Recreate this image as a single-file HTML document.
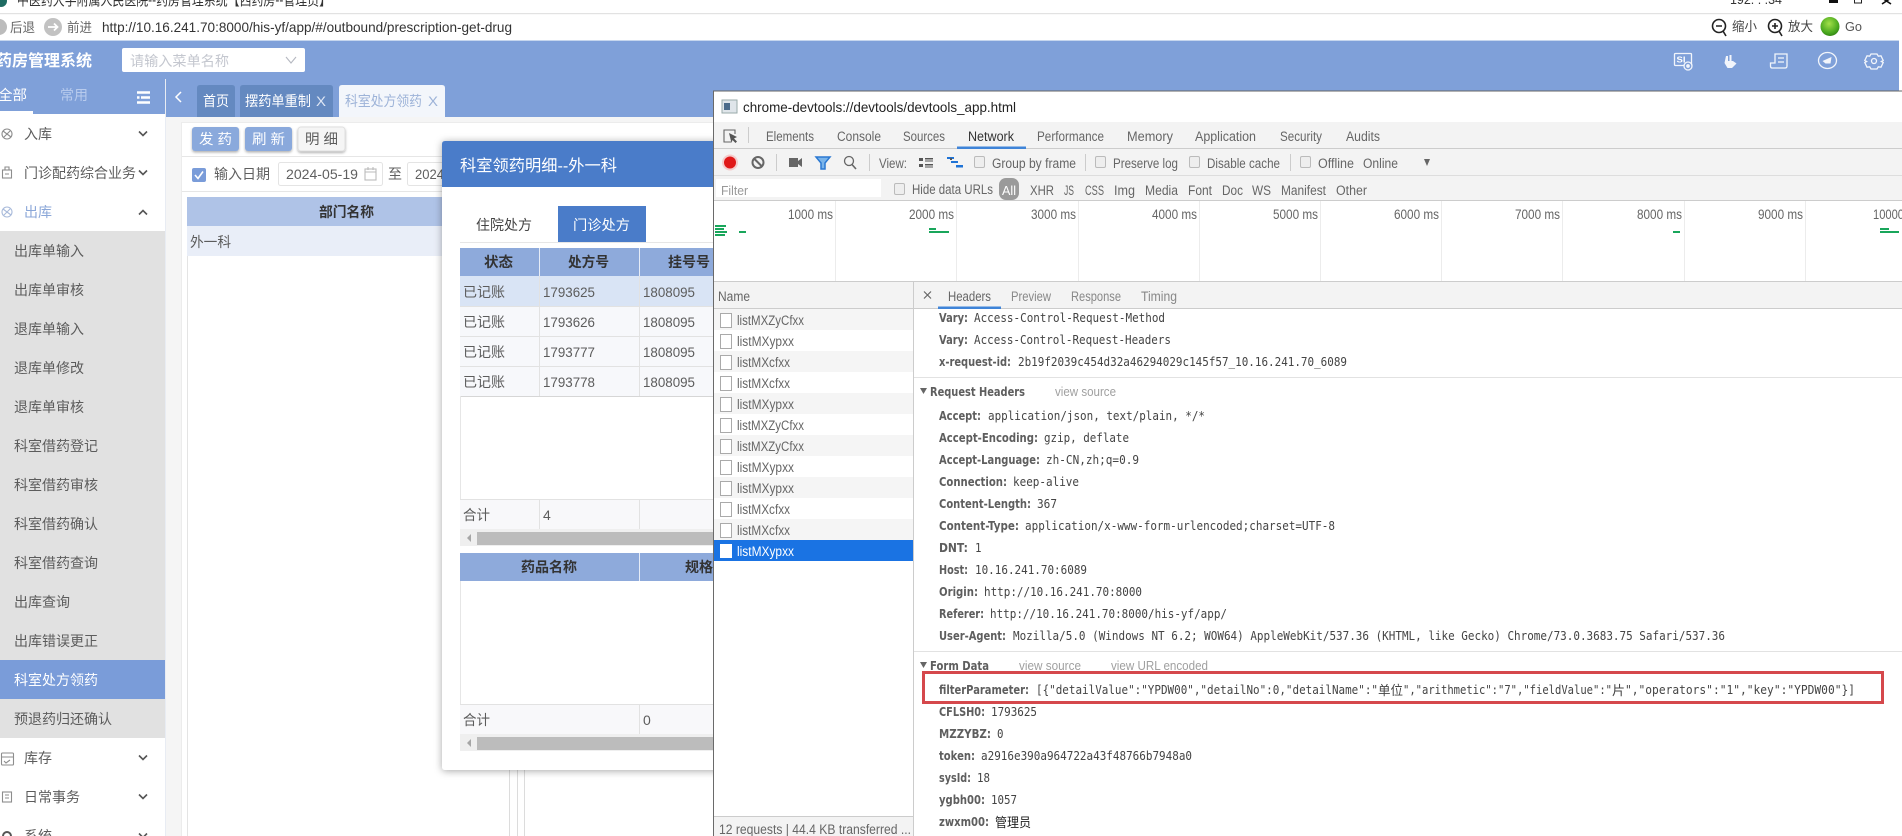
<!DOCTYPE html>
<html lang="zh-CN"><head><meta charset="utf-8"><title>药房管理系统</title>
<style>
html,body{margin:0;padding:0;width:1902px;height:836px;overflow:hidden;background:#fff}
svg{display:block}
text{font-family:"Liberation Sans","Noto Sans CJK SC",sans-serif;font-size:14px;fill:#5c5c5c;white-space:pre}
.w{fill:#fff}
.b{font-weight:700;fill:#333}
.l{font-family:"DejaVu Sans","Noto Sans CJK SC",sans-serif;font-size:12px;font-weight:700;fill:#5e5e5e}
.m{font-family:"DejaVu Sans Mono","Noto Sans CJK SC",monospace;font-size:12px;fill:#444}
.g{font-size:12.500px;fill:#a0a0a0}
.n{font-size:13.500px;fill:#666}
.ic{fill:none;stroke:#8d8d8d;stroke-width:1.1}
</style></head><body>
<svg xmlns="http://www.w3.org/2000/svg" width="1902" height="836" viewBox="0 0 1902 836">
<defs>
<radialGradient id="go" cx=".45" cy=".35" r=".7"><stop offset="0" stop-color="#a3e04a"/><stop offset=".7" stop-color="#49a81e"/><stop offset="1" stop-color="#2e7d12"/></radialGradient>
<filter id="sh" x="-10%" y="-10%" width="120%" height="120%"><feDropShadow dx="0" dy="1" stdDeviation="4" flood-color="#000" flood-opacity=".35"/></filter>
<filter id="bs" x="-20%" y="-20%" width="140%" height="150%"><feDropShadow dx="0" dy="1.5" stdDeviation="1.2" flood-color="#000" flood-opacity=".3"/></filter>
</defs>

<!-- window top -->
<rect width="1902" height="836" fill="#fff"/>
<circle cx="1" cy="1" r="6" fill="#1e6b62"/>
<text x="17" y="5" textLength="314" lengthAdjust="spacingAndGlyphs" style="font-size:15px;fill:#333">中医药大学附属人民医院--药房管理系统【西药房--管理员】</text>
<text x="1730" y="4" textLength="52" lengthAdjust="spacingAndGlyphs" style="font-size:13px;fill:#333">192. . .34</text>
<rect x="1829" y="0" width="9" height="3" fill="#111"/>
<rect x="1854.500" y="-3" width="7" height="6" fill="none" stroke="#222"/>
<path d="M1882-2l9 6M1891-2l-9 6" stroke="#111" stroke-width="1.6"/>
<rect x="0" y="13" width="1902" height="1.2" fill="#e2e2e2"/>

<!-- browser toolbar -->
<circle cx="-1" cy="27" r="8" fill="#bcbcbc"/>
<text x="10" y="32" textLength="25" lengthAdjust="spacingAndGlyphs" style="font-size:13px;fill:#666">后退</text>
<circle cx="53" cy="27" r="9" fill="#c2c2c2"/>
<path d="M48 27h9M54 23.500l3.500 3.500-3.500 3.500" fill="none" stroke="#fff" stroke-width="1.800"/>
<text x="67" y="32" textLength="25" lengthAdjust="spacingAndGlyphs" style="font-size:13px;fill:#666">前进</text>
<text x="102" y="32" textLength="410" lengthAdjust="spacingAndGlyphs" style="font-size:14px;fill:#333">http://10.16.241.70:8000/his-yf/app/#/outbound/prescription-get-drug</text>
<circle cx="1719" cy="26" r="6.500" fill="none" stroke="#222" stroke-width="1.600"/><path d="M1716 26h6M1723 31l3 5" stroke="#222" stroke-width="1.600"/>
<text x="1732" y="31" textLength="25" lengthAdjust="spacingAndGlyphs" style="font-size:13px;fill:#444">缩小</text>
<circle cx="1775" cy="26" r="6.500" fill="none" stroke="#222" stroke-width="1.600"/><path d="M1772 26h6M1775 23v6M1779 31l3 5" stroke="#222" stroke-width="1.600"/>
<text x="1788" y="31" textLength="25" lengthAdjust="spacingAndGlyphs" style="font-size:13px;fill:#444">放大</text>
<ellipse cx="1830" cy="26.500" rx="9.500" ry="9.500" fill="url(#go)"/>
<text x="1845" y="31" textLength="17" lengthAdjust="spacingAndGlyphs" style="font-size:13px;fill:#555">Go</text>

<!-- blue header -->
<rect x="0" y="41" width="1899" height="76" fill="#7fa0d9"/>
<rect x="0" y="40" width="1899" height="1" fill="#c6d6ee"/>
<text x="-4" y="66" textLength="96" lengthAdjust="spacingAndGlyphs" class="w" style="font-size:16px;font-weight:700">药房管理系统</text>
<rect x="122" y="48" width="183" height="24" rx="2" fill="#fff"/>
<text x="130" y="66" textLength="99" lengthAdjust="spacingAndGlyphs" style="fill:#c4c7cf">请输入菜单名称</text>
<path d="M286 57l5 6 5-6" fill="none" stroke="#b5b8c0" stroke-width="1.100"/>
<!-- header icons -->
<g style="fill:none;stroke:#fff;stroke-width:1.300;opacity:.9">
<rect x="1674.500" y="53.500" width="17" height="12" rx="1"/>
<circle cx="1688" cy="66" r="4" fill="#7fa0d9"/><circle cx="1688" cy="66" r="1.200" fill="#fff"/>
<path d="M1726 56h2v5h1.500v-6h2v6h1.500l3.500 2.500-4.500 4.500h-4.500l-3-5z" fill="#fff" stroke="none"/>
<path d="M1775 63v-9h12v12q0 2-2 2h-13q-1.500 0-1.500-2v-3zM1778 58h6M1778 62h6"/>
<ellipse cx="1827.500" cy="60.500" rx="9" ry="8"/><path d="M1822.500 61l9-4-1 6.500-5 0z" fill="#fff" stroke="none"/>
<circle cx="1874" cy="61" r="2.500"/><path d="M1871 54h6l1.300 2.200 2.700-.4 2.200 4.700-1.800 1 1.800 1-2.200 4.700-2.700-.4-1.300 2.200h-6l-1.300-2.200-2.700.4-2.200-4.700 1.800-1-1.800-1 2.200-4.700 2.700.4z"/>
</g>
<text x="1676.500" y="62.500" textLength="9" lengthAdjust="spacingAndGlyphs" style="font-size:8px;font-weight:700;fill:#fff">SI</text>

<!-- sidebar -->
<rect x="0" y="114" width="165" height="722" fill="#fff"/>
<rect x="165" y="79" width="1" height="757" fill="#e8ecf3"/>
<text x="-2" y="100" textLength="29" lengthAdjust="spacingAndGlyphs" class="w">全部</text>
<text x="60" y="100" textLength="28" lengthAdjust="spacingAndGlyphs" style="fill:#b8cbed">常用</text>
<rect x="0" y="111" width="33" height="3" fill="#fff"/>
<path d="M137 92.500h13M141 97.500h9M137 102.500h13" stroke="#fff" stroke-width="2.500"/><path d="M137 97.500l2.500 0" stroke="#fff" stroke-width="2.500"/>

<g class="ic"><circle cx="7" cy="134" r="5"/><path d="M3 131l8 6M4 137l6-6"/></g>
<text x="24" y="139" textLength="28" lengthAdjust="spacingAndGlyphs">入库</text>
<path d="M139 131.500l4 4 4-4" fill="none" stroke="#555" stroke-width="1.600"/>
<g class="ic"><rect x="2.500" y="170" width="9" height="8"/><path d="M5 170v-3h4v3M5 174h4"/></g>
<text x="24" y="178" textLength="112" lengthAdjust="spacingAndGlyphs">门诊配药综合业务</text>
<path d="M139 170.500l4 4 4-4" fill="none" stroke="#555" stroke-width="1.600"/>
<g class="ic" style="stroke:#a9bbdb"><circle cx="7" cy="212" r="5"/><path d="M3 209l8 6M4 215l6-6"/></g>
<text x="24" y="217" textLength="28" lengthAdjust="spacingAndGlyphs" style="fill:#8ba7d8">出库</text>
<path d="M139 214.500l4-4 4 4" fill="none" stroke="#555" stroke-width="1.600"/>

<rect x="0" y="231" width="165" height="507" fill="#e1e1e1"/>
<text x="14" y="256" textLength="70" lengthAdjust="spacingAndGlyphs">出库单输入</text>
<text x="14" y="295" textLength="70" lengthAdjust="spacingAndGlyphs">出库单审核</text>
<text x="14" y="334" textLength="70" lengthAdjust="spacingAndGlyphs">退库单输入</text>
<text x="14" y="373" textLength="70" lengthAdjust="spacingAndGlyphs">退库单修改</text>
<text x="14" y="412" textLength="70" lengthAdjust="spacingAndGlyphs">退库单审核</text>
<text x="14" y="451" textLength="84" lengthAdjust="spacingAndGlyphs">科室借药登记</text>
<text x="14" y="490" textLength="84" lengthAdjust="spacingAndGlyphs">科室借药审核</text>
<text x="14" y="529" textLength="84" lengthAdjust="spacingAndGlyphs">科室借药确认</text>
<text x="14" y="568" textLength="84" lengthAdjust="spacingAndGlyphs">科室借药查询</text>
<text x="14" y="607" textLength="56" lengthAdjust="spacingAndGlyphs">出库查询</text>
<text x="14" y="646" textLength="84" lengthAdjust="spacingAndGlyphs">出库错误更正</text>
<rect x="0" y="660" width="165" height="39" fill="#7a9cd9"/>
<text x="14" y="685" textLength="84" lengthAdjust="spacingAndGlyphs" class="w">科室处方领药</text>
<text x="14" y="724" textLength="98" lengthAdjust="spacingAndGlyphs">预退药归还确认</text>

<g class="ic"><rect x="1.500" y="753" width="12" height="12" rx="1"/><path d="M1.500 757h12M4 761l2 2 4-3"/></g>
<text x="24" y="763" textLength="28" lengthAdjust="spacingAndGlyphs">库存</text>
<path d="M139 755.500l4 4 4-4" fill="none" stroke="#555" stroke-width="1.600"/>
<g class="ic"><rect x="2.500" y="792" width="9" height="10"/><path d="M5 795h4M5 798h4"/></g>
<text x="24" y="802" textLength="56" lengthAdjust="spacingAndGlyphs">日常事务</text>
<path d="M139 794.500l4 4 4-4" fill="none" stroke="#555" stroke-width="1.600"/>
<g class="ic" style="stroke:#555;stroke-width:2"><circle cx="7" cy="836" r="4"/></g>
<text x="24" y="841" textLength="28" lengthAdjust="spacingAndGlyphs">系统</text>
<path d="M139 833.500l4 4 4-4" fill="none" stroke="#555" stroke-width="1.600"/>

<!-- tabs -->
<path d="M181 92l-5 5 5 5" fill="none" stroke="#fff" stroke-width="1.500"/>
<path d="M197 117v-29q0-3 3-3h32q3 0 3 3v29z" fill="#6489c0"/>
<text x="203" y="106" textLength="26" lengthAdjust="spacingAndGlyphs" class="w">首页</text>
<path d="M240 117v-29q0-3 3-3h87q3 0 3 3v29z" fill="#6489c0"/>
<text x="245" y="106" textLength="66" lengthAdjust="spacingAndGlyphs" class="w">摆药单重制</text>
<text x="316" y="106" textLength="10" lengthAdjust="spacingAndGlyphs" style="fill:#dfe7f5">X</text>
<path d="M339 117v-29q0-3 3-3h100q3 0 3 3v29z" fill="#f3f6fb"/>
<text x="345" y="106" textLength="77" lengthAdjust="spacingAndGlyphs" style="fill:#9db3d8">科室处方领药</text>
<text x="428" y="106" textLength="10" lengthAdjust="spacingAndGlyphs" style="fill:#9db3d8">X</text>

<!-- content -->
<rect x="166" y="117" width="548" height="719" fill="#f5f5f5"/>
<rect x="181.500" y="122.500" width="540" height="720" fill="#fff" stroke="#ececec"/>
<rect x="192" y="127" width="47" height="24" rx="3" fill="#8aa9dc" filter="url(#bs)"/>
<text x="199" y="144" textLength="33" lengthAdjust="spacingAndGlyphs" class="w">发 药</text>
<rect x="245" y="127" width="47" height="24" rx="3" fill="#8aa9dc" filter="url(#bs)"/>
<text x="252" y="144" textLength="33" lengthAdjust="spacingAndGlyphs" class="w">刷 新</text>
<rect x="298" y="127" width="47" height="24" rx="3" fill="#f5f5f5" stroke="#e0e0e0" filter="url(#bs)"/>
<text x="305" y="144" textLength="33" lengthAdjust="spacingAndGlyphs">明 细</text>
<rect x="182" y="156" width="530" height="1" fill="#e6e6e6"/>
<rect x="192" y="168" width="14" height="14" rx="2" fill="#7a9cd9"/>
<path d="M195 175l3 3.500 5-7" fill="none" stroke="#fff" stroke-width="1.600"/>
<text x="214" y="179" textLength="56" lengthAdjust="spacingAndGlyphs" style="fill:#606060">输入日期</text>
<rect x="278.500" y="162.500" width="104" height="23" rx="2" fill="#fff" stroke="#e4e4e4"/>
<text x="286" y="179" textLength="72" lengthAdjust="spacingAndGlyphs" style="fill:#606060">2024-05-19</text>
<g class="ic" style="stroke:#bbb"><rect x="365" y="169" width="11" height="11"/><path d="M365 172h11M368 167v3M373 167v3"/></g>
<text x="388" y="179" textLength="14" lengthAdjust="spacingAndGlyphs" style="fill:#606060">至</text>
<rect x="407.500" y="162.500" width="60" height="23" rx="2" fill="#fff" stroke="#e4e4e4"/>
<text x="415" y="179" textLength="29" lengthAdjust="spacingAndGlyphs" style="fill:#606060">2024</text>
<rect x="182" y="191" width="530" height="1" fill="#e6e6e6"/>

<rect x="187" y="197" width="525" height="29" fill="#afc3e7"/>
<text x="319" y="217" textLength="55" lengthAdjust="spacingAndGlyphs" class="b">部门名称</text>
<rect x="187" y="226" width="525" height="30" fill="#e9eef8"/>
<text x="190" y="247" textLength="41" lengthAdjust="spacingAndGlyphs">外一科</text>
<rect x="187" y="256" width="1" height="580" fill="#e4e4e4"/>
<rect x="509" y="760" width="1" height="76" fill="#dcdcdc"/>
<rect x="517" y="760" width="1" height="76" fill="#dcdcdc"/>
<rect x="524" y="760" width="1" height="76" fill="#dcdcdc"/>

<!-- modal -->
<rect x="442" y="141" width="290" height="629" rx="3" fill="#fff" filter="url(#sh)"/>
<path d="M442 187v-43q0-3 3-3h285v46z" fill="#4a7cc9"/>
<text x="460" y="171" textLength="157" lengthAdjust="spacingAndGlyphs" class="w" style="font-size:16px">科室领药明细--外一科</text>
<text x="476" y="230" textLength="56" lengthAdjust="spacingAndGlyphs" style="fill:#444">住院处方</text>
<rect x="558" y="206" width="88" height="36" fill="#4a7cc9"/>
<text x="573" y="230" textLength="57" lengthAdjust="spacingAndGlyphs" class="w">门诊处方</text>
<rect x="460" y="242" width="254" height="1" fill="#e6e6e6"/>

<rect x="460" y="248" width="254" height="28" fill="#8eaadb"/>
<rect x="539" y="248" width="1" height="28" fill="#e6ecf7"/><rect x="639" y="248" width="1" height="28" fill="#e6ecf7"/>
<text x="484" y="267" textLength="29" lengthAdjust="spacingAndGlyphs" class="b">状态</text>
<text x="568" y="267" textLength="41" lengthAdjust="spacingAndGlyphs" class="b">处方号</text>
<text x="668" y="267" textLength="42" lengthAdjust="spacingAndGlyphs" class="b">挂号号</text>
<rect x="460" y="276" width="254" height="30" fill="#d9e4f5"/>
<rect x="460" y="306" width="254" height="90" fill="#f7f8fb"/>
<rect x="460" y="306" width="254" height="1" fill="#e2e2e2"/><rect x="460" y="336" width="254" height="1" fill="#e2e2e2"/><rect x="460" y="366" width="254" height="1" fill="#e2e2e2"/><rect x="460" y="396" width="254" height="1" fill="#d6d6d6"/>
<rect x="539" y="276" width="1" height="120" fill="#e2e2e2"/><rect x="639" y="276" width="1" height="120" fill="#e2e2e2"/>
<text x="463" y="297" textLength="42" lengthAdjust="spacingAndGlyphs">已记账</text><text x="543" y="297" textLength="52" lengthAdjust="spacingAndGlyphs">1793625</text><text x="643" y="297" textLength="52" lengthAdjust="spacingAndGlyphs">1808095</text>
<text x="463" y="327" textLength="42" lengthAdjust="spacingAndGlyphs">已记账</text><text x="543" y="327" textLength="52" lengthAdjust="spacingAndGlyphs">1793626</text><text x="643" y="327" textLength="52" lengthAdjust="spacingAndGlyphs">1808095</text>
<text x="463" y="357" textLength="42" lengthAdjust="spacingAndGlyphs">已记账</text><text x="543" y="357" textLength="52" lengthAdjust="spacingAndGlyphs">1793777</text><text x="643" y="357" textLength="52" lengthAdjust="spacingAndGlyphs">1808095</text>
<text x="463" y="387" textLength="42" lengthAdjust="spacingAndGlyphs">已记账</text><text x="543" y="387" textLength="52" lengthAdjust="spacingAndGlyphs">1793778</text><text x="643" y="387" textLength="52" lengthAdjust="spacingAndGlyphs">1808095</text>
<rect x="460" y="396" width="1" height="103" fill="#e6e6e6"/>
<rect x="460" y="499" width="254" height="30" fill="#f8f8fa"/>
<rect x="460" y="499" width="254" height="1" fill="#e2e2e2"/><rect x="539" y="499" width="1" height="30" fill="#e2e2e2"/><rect x="639" y="499" width="1" height="30" fill="#e2e2e2"/>
<text x="463" y="520" textLength="27" lengthAdjust="spacingAndGlyphs">合计</text><text x="543" y="520">4</text>
<rect x="460" y="529" width="254" height="17" fill="#efefef"/>
<path d="M471 534l-4 4 4 4z" fill="#a6a6a6"/>
<rect x="477" y="532" width="237" height="13" fill="#bcbcbc"/>

<rect x="460" y="553" width="254" height="28" fill="#8eaadb"/>
<rect x="639" y="553" width="1" height="28" fill="#e6ecf7"/>
<text x="521" y="572" textLength="56" lengthAdjust="spacingAndGlyphs" class="b">药品名称</text>
<text x="685" y="572" textLength="28" lengthAdjust="spacingAndGlyphs" class="b">规格</text>
<rect x="460" y="581" width="1" height="123" fill="#e6e6e6"/>
<rect x="460" y="704" width="254" height="30" fill="#f8f8fa"/>
<rect x="460" y="704" width="254" height="1" fill="#e2e2e2"/><rect x="639" y="704" width="1" height="30" fill="#e2e2e2"/>
<text x="463" y="725" textLength="27" lengthAdjust="spacingAndGlyphs">合计</text><text x="643" y="725">0</text>
<rect x="460" y="734" width="254" height="17" fill="#efefef"/>
<path d="M471 739l-4 4 4 4z" fill="#a6a6a6"/>
<rect x="477" y="737" width="237" height="13" fill="#bcbcbc"/>

<!-- devtools window -->
<rect x="713" y="91" width="1189" height="745" fill="#fff"/>
<rect x="713" y="91" width="1" height="745" fill="#6a6a6a"/>
<rect x="713" y="90.500" width="1189" height="1" fill="#666"/>
<rect x="722" y="100" width="15" height="13" fill="#dfe5ea" stroke="#9aa"/><rect x="724" y="103" width="6" height="7" fill="#4b6b8a"/>
<text x="743" y="112" textLength="273" lengthAdjust="spacingAndGlyphs" style="font-size:14px;fill:#222">chrome-devtools://devtools/devtools_app.html</text>
<rect x="714" y="122" width="1188" height="53" fill="#f3f3f3"/>
<rect x="714" y="148" width="1188" height="1" fill="#ccc"/>
<path d="M731 142h-7v-12h11v4" fill="none" stroke="#666" stroke-width="1.100"/><path d="M729 133l8 4-3 1.500 3 3-1.500 1.500-3-3-1 3z" fill="#555"/>
<rect x="748" y="127" width="1" height="16" fill="#ccc"/>
<text x="766" y="141" textLength="48" lengthAdjust="spacingAndGlyphs" class="n">Elements</text>
<text x="837" y="141" textLength="44" lengthAdjust="spacingAndGlyphs" class="n">Console</text>
<text x="903" y="141" textLength="42" lengthAdjust="spacingAndGlyphs" class="n">Sources</text>
<text x="968" y="141" textLength="46" lengthAdjust="spacingAndGlyphs" class="n" style="fill:#333">Network</text>
<text x="1037" y="141" textLength="67" lengthAdjust="spacingAndGlyphs" class="n">Performance</text>
<text x="1127" y="141" textLength="46" lengthAdjust="spacingAndGlyphs" class="n">Memory</text>
<text x="1195" y="141" textLength="61" lengthAdjust="spacingAndGlyphs" class="n">Application</text>
<text x="1280" y="141" textLength="42" lengthAdjust="spacingAndGlyphs" class="n">Security</text>
<text x="1346" y="141" textLength="34" lengthAdjust="spacingAndGlyphs" class="n">Audits</text>
<rect x="957" y="146.500" width="69" height="2.500" fill="#3f84d8"/>

<circle cx="730" cy="162.500" r="8" fill="#f6b0b0" opacity=".6"/><circle cx="730" cy="162.500" r="6" fill="#e01818"/>
<circle cx="758" cy="162.500" r="5.500" fill="none" stroke="#666" stroke-width="2"/><path d="M754 158.500l8 8" stroke="#666" stroke-width="2"/>
<rect x="776" y="154" width="1" height="17" fill="#ccc"/>
<path d="M789 158h9v9h-9zM798 161l4-3v9l-4-3z" fill="#666"/>
<path d="M816 157h14l-5 6v6h-4v-6z" fill="#7ab4ea" stroke="#2a78d2" stroke-width="1.500"/>
<circle cx="849" cy="161" r="4.500" fill="none" stroke="#666" stroke-width="1.300"/><path d="M852 164.500l4 4.500" stroke="#666" stroke-width="1.600"/>
<rect x="869" y="154" width="1" height="17" fill="#ccc"/>
<text x="879" y="168" textLength="28" lengthAdjust="spacingAndGlyphs" class="n">View:</text>
<path d="M919 158h4v3h-4zM925 158h8v1.500h-8zM925 160.500h8v1h-8zM919 164h4v3h-4zM925 164h8v1.500h-8zM925 166.500h8v1h-8z" fill="#555"/>
<path d="M947 157h7v2h-7zM951 161h7v2h-7zM956 165h7v2.500h-7z" fill="#1f73d6"/><path d="M950 158h2v2h-2z" fill="#555"/>
<rect x="974.500" y="156.500" width="10" height="11" rx="1.500" fill="#eee" stroke="#bbb"/>
<text x="992" y="168" textLength="84" lengthAdjust="spacingAndGlyphs" class="n">Group by frame</text>
<rect x="1085" y="154" width="1" height="17" fill="#ccc"/>
<rect x="1095.500" y="156.500" width="10" height="11" rx="1.500" fill="#eee" stroke="#bbb"/>
<text x="1113" y="168" textLength="65" lengthAdjust="spacingAndGlyphs" class="n">Preserve log</text>
<rect x="1189.500" y="156.500" width="10" height="11" rx="1.500" fill="#eee" stroke="#bbb"/>
<text x="1207" y="168" textLength="73" lengthAdjust="spacingAndGlyphs" class="n">Disable cache</text>
<rect x="1290" y="154" width="1" height="17" fill="#ccc"/>
<rect x="1300.500" y="156.500" width="10" height="11" rx="1.500" fill="#eee" stroke="#bbb"/>
<text x="1318" y="168" textLength="36" lengthAdjust="spacingAndGlyphs" class="n">Offline</text>
<text x="1363" y="168" textLength="35" lengthAdjust="spacingAndGlyphs" class="n">Online</text>
<path d="M1424 159h6l-3 7z" fill="#666"/>
<rect x="714" y="175" width="1188" height="1" fill="#ddd"/>
<rect x="714" y="176" width="1188" height="25" fill="#f3f3f3"/>
<rect x="716" y="179" width="165" height="18" fill="#fff"/>
<text x="721" y="195" textLength="27" lengthAdjust="spacingAndGlyphs" style="font-size:13px;fill:#999">Filter</text>
<rect x="894.500" y="183.500" width="10" height="11" rx="1.500" fill="#eee" stroke="#bbb"/>
<text x="912" y="194" textLength="81" lengthAdjust="spacingAndGlyphs" class="n">Hide data URLs</text>
<rect x="999" y="178" width="20" height="22" rx="7" fill="#9a9a9a"/>
<text x="1002" y="195" textLength="14" lengthAdjust="spacingAndGlyphs" class="w" style="font-size:13px">All</text>
<text x="1030" y="195" textLength="24" lengthAdjust="spacingAndGlyphs" class="n">XHR</text>
<text x="1064" y="195" textLength="10" lengthAdjust="spacingAndGlyphs" class="n">JS</text>
<text x="1085" y="195" textLength="19" lengthAdjust="spacingAndGlyphs" class="n">CSS</text>
<text x="1114" y="195" textLength="21" lengthAdjust="spacingAndGlyphs" class="n">Img</text>
<text x="1145" y="195" textLength="33" lengthAdjust="spacingAndGlyphs" class="n">Media</text>
<text x="1188" y="195" textLength="24" lengthAdjust="spacingAndGlyphs" class="n">Font</text>
<text x="1222" y="195" textLength="21" lengthAdjust="spacingAndGlyphs" class="n">Doc</text>
<text x="1252" y="195" textLength="19" lengthAdjust="spacingAndGlyphs" class="n">WS</text>
<text x="1281" y="195" textLength="45" lengthAdjust="spacingAndGlyphs" class="n">Manifest</text>
<text x="1336" y="195" textLength="31" lengthAdjust="spacingAndGlyphs" class="n">Other</text>
<rect x="714" y="200" width="1188" height="1" fill="#ccc"/>

<!-- timeline -->
<g fill="#ececec"><rect x="835" y="201" width="1" height="80"/><rect x="956" y="201" width="1" height="80"/><rect x="1078" y="201" width="1" height="80"/><rect x="1199" y="201" width="1" height="80"/><rect x="1320" y="201" width="1" height="80"/><rect x="1441" y="201" width="1" height="80"/><rect x="1562" y="201" width="1" height="80"/><rect x="1684" y="201" width="1" height="80"/><rect x="1805" y="201" width="1" height="80"/></g>
<text x="788" y="219" textLength="45" lengthAdjust="spacingAndGlyphs" class="n">1000 ms</text>
<text x="909" y="219" textLength="45" lengthAdjust="spacingAndGlyphs" class="n">2000 ms</text>
<text x="1031" y="219" textLength="45" lengthAdjust="spacingAndGlyphs" class="n">3000 ms</text>
<text x="1152" y="219" textLength="45" lengthAdjust="spacingAndGlyphs" class="n">4000 ms</text>
<text x="1273" y="219" textLength="45" lengthAdjust="spacingAndGlyphs" class="n">5000 ms</text>
<text x="1394" y="219" textLength="45" lengthAdjust="spacingAndGlyphs" class="n">6000 ms</text>
<text x="1515" y="219" textLength="45" lengthAdjust="spacingAndGlyphs" class="n">7000 ms</text>
<text x="1637" y="219" textLength="45" lengthAdjust="spacingAndGlyphs" class="n">8000 ms</text>
<text x="1758" y="219" textLength="45" lengthAdjust="spacingAndGlyphs" class="n">9000 ms</text>
<text x="1873" y="219" textLength="31" lengthAdjust="spacingAndGlyphs" class="n">10000</text>
<g fill="#19a65b"><rect x="715" y="225" width="11" height="2"/><rect x="715" y="228" width="9" height="2"/><rect x="715" y="231" width="12" height="2"/><rect x="715" y="234" width="10" height="2"/><rect x="739" y="231" width="7" height="2"/><rect x="929" y="228" width="7" height="2"/><rect x="929" y="231" width="20" height="2"/><rect x="1673" y="231" width="7" height="2"/><rect x="1880" y="228" width="9" height="2"/><rect x="1880" y="231" width="19" height="2"/></g>
<rect x="714" y="281" width="1188" height="1" fill="#ccc"/>

<!-- network list -->
<rect x="714" y="282" width="199" height="26" fill="#f3f3f3"/>
<rect x="913" y="282" width="989" height="26" fill="#f3f3f3"/>
<rect x="714" y="308" width="1188" height="1" fill="#ccc"/>
<rect x="913" y="282" width="1" height="554" fill="#ccc"/>
<text x="718" y="301" textLength="32" lengthAdjust="spacingAndGlyphs" class="n">Name</text>
<path d="M924 291.500l7 7M931 291.500l-7 7" stroke="#666" stroke-width="1.200"/>
<text x="948" y="301" textLength="43" lengthAdjust="spacingAndGlyphs" class="n">Headers</text>
<text x="1011" y="301" textLength="40" lengthAdjust="spacingAndGlyphs" class="n" style="fill:#888">Preview</text>
<text x="1071" y="301" textLength="50" lengthAdjust="spacingAndGlyphs" class="n" style="fill:#888">Response</text>
<text x="1141" y="301" textLength="36" lengthAdjust="spacingAndGlyphs" class="n" style="fill:#888">Timing</text>
<rect x="938" y="306.500" width="63" height="2.500" fill="#3f84d8"/>

<g fill="#f5f5f5"><rect x="714" y="309" width="199" height="21"/><rect x="714" y="351" width="199" height="21"/><rect x="714" y="393" width="199" height="21"/><rect x="714" y="435" width="199" height="21"/><rect x="714" y="477" width="199" height="21"/><rect x="714" y="519" width="199" height="21"/></g>
<rect x="714" y="540" width="199" height="21" fill="#1a73e3"/>
<g fill="#fff" stroke="#aaa"><rect x="720.500" y="313.500" width="11" height="14"/><rect x="720.500" y="334.500" width="11" height="14"/><rect x="720.500" y="355.500" width="11" height="14"/><rect x="720.500" y="376.500" width="11" height="14"/><rect x="720.500" y="397.500" width="11" height="14"/><rect x="720.500" y="418.500" width="11" height="14"/><rect x="720.500" y="439.500" width="11" height="14"/><rect x="720.500" y="460.500" width="11" height="14"/><rect x="720.500" y="481.500" width="11" height="14"/><rect x="720.500" y="502.500" width="11" height="14"/><rect x="720.500" y="523.500" width="11" height="14"/></g>
<rect x="720" y="544" width="12" height="14" fill="#fff"/>
<text x="737" y="325" textLength="67" lengthAdjust="spacingAndGlyphs" class="n">listMXZyCfxx</text>
<text x="737" y="346" textLength="57" lengthAdjust="spacingAndGlyphs" class="n">listMXypxx</text>
<text x="737" y="367" textLength="53" lengthAdjust="spacingAndGlyphs" class="n">listMXcfxx</text>
<text x="737" y="388" textLength="53" lengthAdjust="spacingAndGlyphs" class="n">listMXcfxx</text>
<text x="737" y="409" textLength="57" lengthAdjust="spacingAndGlyphs" class="n">listMXypxx</text>
<text x="737" y="430" textLength="67" lengthAdjust="spacingAndGlyphs" class="n">listMXZyCfxx</text>
<text x="737" y="451" textLength="67" lengthAdjust="spacingAndGlyphs" class="n">listMXZyCfxx</text>
<text x="737" y="472" textLength="57" lengthAdjust="spacingAndGlyphs" class="n">listMXypxx</text>
<text x="737" y="493" textLength="57" lengthAdjust="spacingAndGlyphs" class="n">listMXypxx</text>
<text x="737" y="514" textLength="53" lengthAdjust="spacingAndGlyphs" class="n">listMXcfxx</text>
<text x="737" y="535" textLength="53" lengthAdjust="spacingAndGlyphs" class="n">listMXcfxx</text>
<text x="737" y="556" textLength="57" lengthAdjust="spacingAndGlyphs" class="n" style="fill:#fff">listMXypxx</text>
<rect x="714" y="816" width="199" height="20" fill="#f3f3f3"/>
<rect x="714" y="816" width="199" height="1" fill="#ccc"/>
<text x="719" y="834" textLength="192" lengthAdjust="spacingAndGlyphs" class="n">12 requests | 44.4 KB transferred ...</text>

<!-- headers -->
<text x="939" y="322" textLength="29" lengthAdjust="spacingAndGlyphs" class="l">Vary:</text><text x="974" y="322" textLength="191" lengthAdjust="spacingAndGlyphs" class="m">Access-Control-Request-Method</text>
<text x="939" y="344" textLength="29" lengthAdjust="spacingAndGlyphs" class="l">Vary:</text><text x="974" y="344" textLength="197" lengthAdjust="spacingAndGlyphs" class="m">Access-Control-Request-Headers</text>
<text x="939" y="366" textLength="72" lengthAdjust="spacingAndGlyphs" class="l">x-request-id:</text><text x="1018" y="366" textLength="329" lengthAdjust="spacingAndGlyphs" class="m">2b19f2039c454d32a46294029c145f57_10.16.241.70_6089</text>
<rect x="914" y="377" width="988" height="1" fill="#e2e2e2"/>
<path d="M920 388h7l-3.500 6z" fill="#666"/>
<text x="930" y="396" textLength="95" lengthAdjust="spacingAndGlyphs" class="l">Request Headers</text>
<text x="1055" y="396" textLength="61" lengthAdjust="spacingAndGlyphs" class="g">view source</text>
<text x="939" y="420" textLength="42" lengthAdjust="spacingAndGlyphs" class="l">Accept:</text><text x="988" y="420" textLength="217" lengthAdjust="spacingAndGlyphs" class="m">application/json, text/plain, */*</text>
<text x="939" y="442" textLength="99" lengthAdjust="spacingAndGlyphs" class="l">Accept-Encoding:</text><text x="1044" y="442" textLength="85" lengthAdjust="spacingAndGlyphs" class="m">gzip, deflate</text>
<text x="939" y="464" textLength="101" lengthAdjust="spacingAndGlyphs" class="l">Accept-Language:</text><text x="1046" y="464" textLength="93" lengthAdjust="spacingAndGlyphs" class="m">zh-CN,zh;q=0.9</text>
<text x="939" y="486" textLength="68" lengthAdjust="spacingAndGlyphs" class="l">Connection:</text><text x="1013" y="486" textLength="66" lengthAdjust="spacingAndGlyphs" class="m">keep-alive</text>
<text x="939" y="508" textLength="92" lengthAdjust="spacingAndGlyphs" class="l">Content-Length:</text><text x="1037" y="508" textLength="20" lengthAdjust="spacingAndGlyphs" class="m">367</text>
<text x="939" y="530" textLength="80" lengthAdjust="spacingAndGlyphs" class="l">Content-Type:</text><text x="1025" y="530" textLength="310" lengthAdjust="spacingAndGlyphs" class="m">application/x-www-form-urlencoded;charset=UTF-8</text>
<text x="939" y="552" textLength="29" lengthAdjust="spacingAndGlyphs" class="l">DNT:</text><text x="975" y="552" textLength="6.500" lengthAdjust="spacingAndGlyphs" class="m">1</text>
<text x="939" y="574" textLength="29" lengthAdjust="spacingAndGlyphs" class="l">Host:</text><text x="975" y="574" textLength="112" lengthAdjust="spacingAndGlyphs" class="m">10.16.241.70:6089</text>
<text x="939" y="596" textLength="39" lengthAdjust="spacingAndGlyphs" class="l">Origin:</text><text x="984" y="596" textLength="158" lengthAdjust="spacingAndGlyphs" class="m">http://10.16.241.70:8000</text>
<text x="939" y="618" textLength="45" lengthAdjust="spacingAndGlyphs" class="l">Referer:</text><text x="990" y="618" textLength="237" lengthAdjust="spacingAndGlyphs" class="m">http://10.16.241.70:8000/his-yf/app/</text>
<text x="939" y="640" textLength="67" lengthAdjust="spacingAndGlyphs" class="l">User-Agent:</text><text x="1013" y="640" textLength="712" lengthAdjust="spacingAndGlyphs" class="m">Mozilla/5.0 (Windows NT 6.2; WOW64) AppleWebKit/537.36 (KHTML, like Gecko) Chrome/73.0.3683.75 Safari/537.36</text>
<rect x="914" y="651" width="988" height="1" fill="#e2e2e2"/>
<path d="M920 662h7l-3.500 6z" fill="#666"/>
<text x="930" y="670" textLength="59" lengthAdjust="spacingAndGlyphs" class="l">Form Data</text>
<text x="1019" y="670" textLength="62" lengthAdjust="spacingAndGlyphs" class="g">view source</text>
<text x="1111" y="670" textLength="97" lengthAdjust="spacingAndGlyphs" class="g">view URL encoded</text>
<rect x="923.500" y="672.500" width="959" height="30" fill="none" stroke="#d5484c" stroke-width="3"/>
<text x="939" y="694" textLength="90" lengthAdjust="spacingAndGlyphs" class="l">filterParameter:</text><text x="1036" y="694" textLength="342" lengthAdjust="spacingAndGlyphs" class="m">[{"detailValue":"YPDW00","detailNo":0,"detailName":"</text><text x="1378" y="695" textLength="25" lengthAdjust="spacingAndGlyphs" class="m" style="font-size:13px">单位</text><text x="1403" y="694" textLength="209" lengthAdjust="spacingAndGlyphs" class="m">","arithmetic":"7","fieldValue":"</text><text x="1612" y="695" textLength="13" lengthAdjust="spacingAndGlyphs" class="m" style="font-size:13px">片</text><text x="1625" y="694" textLength="230" lengthAdjust="spacingAndGlyphs" class="m">","operators":"1","key":"YPDW00"}]</text>
<text x="939" y="716" textLength="46" lengthAdjust="spacingAndGlyphs" class="l">CFLSH0:</text><text x="991" y="716" textLength="46" lengthAdjust="spacingAndGlyphs" class="m">1793625</text>
<text x="939" y="738" textLength="52" lengthAdjust="spacingAndGlyphs" class="l">MZZYBZ:</text><text x="997" y="738" textLength="6.500" lengthAdjust="spacingAndGlyphs" class="m">0</text>
<text x="939" y="760" textLength="36" lengthAdjust="spacingAndGlyphs" class="l">token:</text><text x="981" y="760" textLength="211" lengthAdjust="spacingAndGlyphs" class="m">a2916e390a964722a43f48766b7948a0</text>
<text x="939" y="782" textLength="32" lengthAdjust="spacingAndGlyphs" class="l">sysId:</text><text x="977" y="782" textLength="13" lengthAdjust="spacingAndGlyphs" class="m">18</text>
<text x="939" y="804" textLength="46" lengthAdjust="spacingAndGlyphs" class="l">ygbh00:</text><text x="991" y="804" textLength="26" lengthAdjust="spacingAndGlyphs" class="m">1057</text>
<text x="939" y="826" textLength="50" lengthAdjust="spacingAndGlyphs" class="l">zwxm00:</text><text x="995" y="827" textLength="36" lengthAdjust="spacingAndGlyphs" style="font-size:13px;fill:#222">管理员</text>
</svg>
</body></html>
